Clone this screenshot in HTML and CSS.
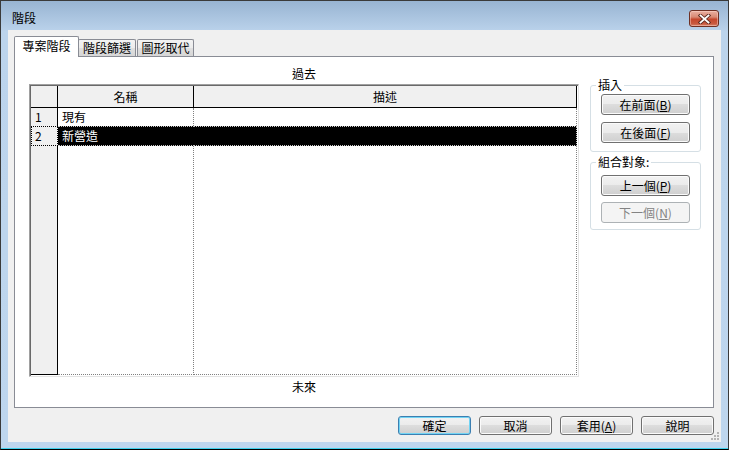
FILE: index.html
```html
<!DOCTYPE html>
<html>
<head>
<meta charset="utf-8">
<title>階段</title>
<link rel="stylesheet" href="styles.css">
</head>
<body>
<div class="window">
  <div class="titlebar">
    <span class="title">階段</span>
    <div class="close">
      <svg width="13" height="10" viewBox="0 0 13 10">
        <path d="M2.5 1.5 L10.5 8.5 M10.5 1.5 L2.5 8.5" stroke="#5b2a20" stroke-width="3.6" stroke-linecap="square"/>
        <path d="M2.5 1.5 L10.5 8.5 M10.5 1.5 L2.5 8.5" stroke="#ffffff" stroke-width="1.8" stroke-linecap="square"/>
      </svg>
    </div>
  </div>
  <div class="client">
    <div class="tabs">
      <div class="tab active">專案階段</div>
      <div class="tab t2">階段篩選</div>
      <div class="tab t3">圖形取代</div>
    </div>
    <div class="panel">
      <div class="phases">
        <div class="cap cap-top">過去</div>
        <div class="grid">
          <div class="row head">
            <div class="c0"></div><div class="c1">名稱</div><div class="c2">描述</div>
          </div>
          <div class="row r1">
            <div class="c0">1</div><div class="c1">現有</div><div class="c2"></div>
          </div>
          <div class="row r2">
            <div class="c0">2</div><div class="c1">新營造</div><div class="c2"></div>
          </div>
          <div class="row fill">
            <div class="c0"></div><div class="c1"></div><div class="c2"></div>
          </div>
        </div>
        <div class="cap cap-bottom">未來</div>
      </div>
      <div class="side">
        <fieldset class="group g1">
          <legend>插入</legend>
          <button class="btn side-btn">在前面(<u>B</u>)</button>
          <button class="btn side-btn">在後面(<u>F</u>)</button>
        </fieldset>
        <fieldset class="group g2">
          <legend>組合對象:</legend>
          <button class="btn side-btn">上一個(<u>P</u>)</button>
          <button class="btn side-btn" disabled>下一個(<u>N</u>)</button>
        </fieldset>
      </div>
    </div>
    <div class="actions">
      <button class="btn act default">確定</button>
      <button class="btn act">取消</button>
      <button class="btn act">套用(<u>A</u>)</button>
      <button class="btn act">說明</button>
    </div>
    <svg class="grip" width="9" height="9" viewBox="0 0 9 9">
      <rect x="6" y="0" width="2" height="2" fill="#b4b4b4"/>
      <rect x="3" y="3" width="2" height="2" fill="#b4b4b4"/>
      <rect x="6" y="3" width="2" height="2" fill="#b4b4b4"/>
      <rect x="0" y="6" width="2" height="2" fill="#b4b4b4"/>
      <rect x="3" y="6" width="2" height="2" fill="#b4b4b4"/>
      <rect x="6" y="6" width="2" height="2" fill="#b4b4b4"/>
    </svg>
  </div>
</div>
</body>
</html>
```
FILE: styles.css
```css
* { box-sizing: border-box; }
html, body { margin: 0; padding: 0; }
body {
  width: 729px;
  height: 450px;
  overflow: hidden;
  font-family: "Noto Sans CJK TC", "Liberation Sans", sans-serif;
  font-size: 12px;
  color: #000;
  background: #fff;
}
.window {
  width: 729px;
  height: 450px;
  border: 1px solid #3a3a3a;
  border-bottom-color: #000;
  background: linear-gradient(#98b4d2 0px, #b9d1ea 29px, #bcd4ec 30px, #bed6ee 100%);
  box-shadow: inset 0 -1px 0 #3fd0ec;
  display: flex;
  flex-direction: column;
}
.titlebar {
  height: 29px;
  flex: none;
  display: flex;
  align-items: center;
  padding: 4px 9px 0 11px;
}
.title {
  font-size: 12px;
  line-height: 15px;
  color: #000;
}
.close {
  margin-left: auto;
  align-self: flex-start;
  margin-top: 5px;
  width: 30px;
  height: 17px;
  border: 1px solid #6e3024;
  border-radius: 3px;
  background: linear-gradient(#eab0a1 0%, #d98a75 40%, #c5472d 55%, #c85a40 85%, #d8836b 100%);
  box-shadow: inset 0 0 0 1px rgba(255, 220, 210, 0.45);
  display: flex;
  align-items: center;
  justify-content: center;
}
.client {
  position: relative;
  flex: none;
  height: 412px;
  margin: 0 7px;
  background: #f0f0f0;
  padding: 6px 7px 7px 6px;
  display: flex;
  flex-direction: column;
}
.tabs {
  display: flex;
  align-items: flex-end;
  height: 20px;
  flex: none;
}
.tab {
  border: 1px solid #898c95;
  border-bottom: none;
  text-align: center;
  white-space: nowrap;
}
.tab.active {
  position: relative;
  z-index: 1;
  width: 65px;
  height: 21px;
  margin-bottom: -1px;
  background: #fff;
  line-height: 17px;
  border-radius: 2px 2px 0 0;
}
.tab.t2, .tab.t3 {
  height: 17px;
  line-height: 15px;
  background: linear-gradient(#f3f3f3 0%, #ececec 50%, #e0e0e0 50%, #d6d6d6 100%);
  border-radius: 2px 2px 0 0;
}
.tab.t2 { width: 58px; margin-left: -1px; }
.tab.t3 { width: 57px; margin-left: 1px; }
.panel {
  height: 352px;
  flex: none;
  border: 1px solid #898c95;
  background: #fff;
  display: flex;
  padding: 0 12px 0 14px;
}
.phases {
  width: 550px;
  display: flex;
  flex-direction: column;
}
.cap {
  text-align: center;
  line-height: 14px;
}
.cap-top { height: 27px; padding-top: 10px; }
.cap-bottom { padding-top: 3px; }
.grid {
  height: 293px;
  border: 1px solid;
  border-color: #a0a0a0 #e3e3e3 #e3e3e3 #a0a0a0;
  padding: 1px 0 0 1px;
  box-shadow: inset 1px 1px 0 #696969;
  background: #fff;
}
.row { display: flex; }
.c0 { width: 27px; flex: none; }
.c1 { width: 136px; flex: none; }
.c2 { width: 383px; flex: none; }
.head { height: 22px; }
.head > div {
  background: #f0f0f0;
  border-right: 1px solid #000;
  border-bottom: 1px solid #000;
  text-align: center;
  line-height: 21px;
}
.r1 { height: 18px; line-height: 18px; }
.r1 .c0 {
  background: #f0f0f0;
  border-right: 1px solid #000;
  padding-left: 4px;
}
.r1 .c1 { padding-left: 4px; border-right: 1px dotted #808080; }
.r1 .c2 { border-right: 1px dotted #808080; }
.r2 { height: 20px; line-height: 18px; }
.r2 .c0 {
  background: #f0f0f0;
  border: 1px dotted #000;
  padding-left: 3px;
}
.r2 .c1, .r2 .c2 {
  background: #000;
  color: #fff;
  border-top: 1px dotted #c8c8c8;
  border-bottom: 1px dotted #c8c8c8;
}
.r2 .c1 { padding-left: 4px; }
.r2 .c2 { border-right: 1px dotted #c8c8c8; }
.fill { height: 229px; }
.fill .c0 {
  background: #f0f0f0;
  border-right: 1px solid #000;
  border-bottom: 1px solid #000;
}
.fill .c1, .fill .c2 {
  border-right: 1px dotted #808080;
  border-bottom: 1px dotted #808080;
}
.side {
  width: 111px;
  margin-left: 11px;
  margin-top: 21px;
  display: flex;
  flex-direction: column;
}
.group {
  margin: 0;
  min-width: 0;
  border: 1px solid #d5dfe5;
  border-radius: 3px;
  padding: 2px 10px 8px 10px;
}
.group legend {
  padding: 0 2px;
  margin-left: -5px;
  line-height: 14px;
  font-size: 12px;
}
.g2 { margin-top: 3px; padding-top: 6px; padding-bottom: 6px; }
.btn {
  font-family: "Noto Sans CJK TC", "Liberation Sans", sans-serif;
  font-size: 12px;
  color: #000;
  padding: 0;
  margin: 0;
  border: 1px solid #707070;
  border-radius: 3px;
  background: linear-gradient(#f2f2f2 0%, #ebebeb 50%, #dddddd 50%, #cfcfcf 100%);
  box-shadow: inset 0 0 0 1px #fbfbfb;
  text-align: center;
  white-space: nowrap;
}
.btn u { text-decoration: underline; }
.side-btn {
  display: block;
  width: 89px;
  height: 21px;
  line-height: 19px;
}
.g1 .side-btn + .side-btn { margin-top: 7px; }
.g2 .side-btn + .side-btn { margin-top: 6px; }
.btn:disabled {
  border-color: #adb2b5;
  background: #f4f4f4;
  color: #838383;
  box-shadow: none;
}
.actions {
  flex: none;
  margin-top: 8px;
  height: 19px;
  display: flex;
  justify-content: flex-end;
  gap: 8px;
}
.act {
  width: 73px;
  height: 19px;
  line-height: 17px;
}
.act.default {
  border-color: #3c7fb1;
  box-shadow: inset 0 0 0 1px #72d4f4;
}
.grip {
  position: absolute;
  right: 1px;
  bottom: 1px;
}
```
